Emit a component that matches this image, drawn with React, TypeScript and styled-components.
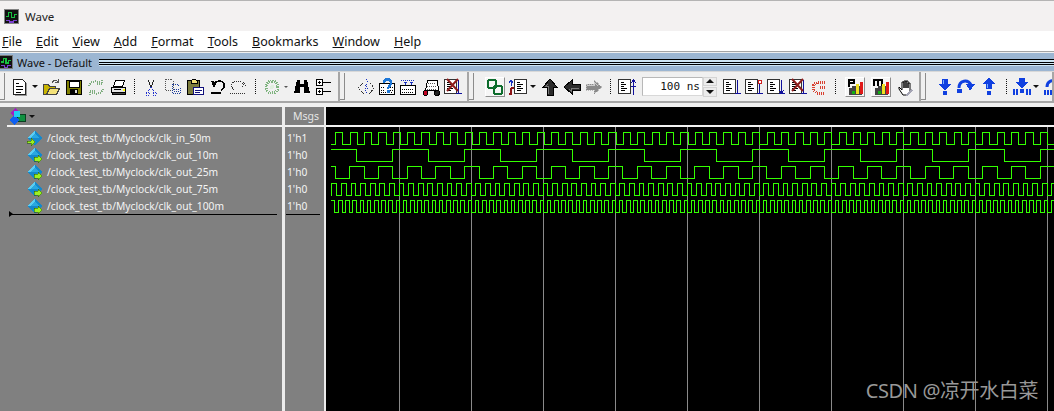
import React from 'react'
import styled, { createGlobalStyle } from 'styled-components'

const GlobalStyle = createGlobalStyle`
  html, body {
    margin: 0;
    padding: 0;
    width: 1054px;
    height: 411px;
    overflow: hidden;
    background: #f0f0f0;
  }
`

const Page = styled.div`
  width: 1054px;
  height: 411px;
  display: flex;
  flex-direction: column;
  overflow: hidden;
  font-family: "Noto Sans", "Liberation Sans", sans-serif;
`

const TitleBar = styled.div`
  height: 30px;
  border-top: 1px solid #b4b4b4;
  background: #f3f1f1;
  display: flex;
  align-items: center;
  gap: 6px;
  padding-left: 4px;
  font-size: 11.5px;
  color: #222;
`

const MenuBar = styled.div`
  height: 20px;
  background: #fff;
  display: flex;
  align-items: center;
  gap: 14px;
  padding-left: 2px;
  font-size: 12.5px;
  color: #111;
`

const MenuItem = styled.span`
  u {
    text-underline-offset: 1px;
  }
`

const SubGap = styled.div`
  height: 1px;
  border-top: 1px solid #a4a4a4;
  background: #f0f0f0;
`

const WindowHeader = styled.div`
  height: 18px;
  background: #9cb6d2;
  display: flex;
  align-items: center;
  gap: 4px;
  font-size: 11px;
  color: #111;
  overflow: hidden;
`

const HeaderStripes = styled.div`
  flex: 1;
  margin-left: 3px;
  height: 7px;
  background: linear-gradient(
    #000 0 1px,
    #cfe6f4 1px 3px,
    #000 3px 4px,
    #cfe6f4 4px 5px,
    #000 5px 6px,
    #cfe6f4 6px 7px
  );
`

const Toolbar = styled.div`
  height: 34px;
  background: #f0f0f0;
  border-top: 1px solid #d8d8d8;
  display: flex;
  box-sizing: border-box;
  padding-bottom: 2px;
`

const ToolGroup = styled.div<{ $w: number }>`
  width: ${p => p.$w}px;
  flex: none;
  display: flex;
  align-items: center;
  box-sizing: border-box;
  border-right: 2px solid #a6a6a6;
  border-bottom: 2px solid #a6a6a6;
  overflow: hidden;
`

const Grip = styled.div`
  width: 5px;
  height: 27px;
  flex: none;
  box-sizing: border-box;
  border-right: 1px solid #8c8c8c;
  border-bottom: 1px solid #8c8c8c;
  margin-right: 1px;
`

const Slot = styled.div<{ $w: number }>`
  width: ${p => p.$w}px;
  height: 24px;
  flex: none;
  display: flex;
  align-items: center;
  justify-content: center;
`

const PushedSlot = styled(Slot)`
  height: 20px;
  box-sizing: border-box;
  margin: 0 3px;
  border: 1px solid #fff;
  border-right-color: #8e8e8e;
  border-bottom-color: #8e8e8e;
  background: #f6f6f6;
`

const Sep = styled.div<{ $w: number }>`
  width: ${p => p.$w}px;
  flex: none;
  height: 15px;
  background: repeating-linear-gradient(#111 0 1px, transparent 1px 2px) center / 1px 100% no-repeat;
`

const DropArrow = styled.div<{ $w: number; $small?: boolean }>`
  width: ${p => p.$w}px;
  flex: none;
  display: flex;
  justify-content: center;
  &::after {
    content: "";
    border-style: solid;
    border-width: ${p => (p.$small ? '2px 2px 0' : '3px 3px 0')};
    border-color: ${p => (p.$small ? '#555' : '#111')} transparent transparent;
  }
`

const TimeInput = styled.div`
  width: 61px;
  height: 19px;
  flex: none;
  box-sizing: border-box;
  margin-left: 2px;
  background: #fff;
  border: 1px solid #d8d8d8;
  border-top-color: #b8b8b8;
  border-left-color: #b8b8b8;
  font-family: "DejaVu Sans Mono", "Liberation Mono", monospace;
  font-size: 11px;
  line-height: 18px;
  text-align: right;
  padding-right: 2px;
  color: #111;
  white-space: nowrap;
`

const Spinner = styled.div`
  width: 14px;
  height: 20px;
  flex: none;
  display: flex;
  flex-direction: column;
  gap: 1px;
  margin-right: 4px;
`

const SpinButton = styled.div<{ $down?: boolean }>`
  flex: 1;
  background: #ececec;
  border: 1px solid #d4d4d4;
  display: flex;
  align-items: center;
  justify-content: center;
  &::after {
    content: "";
    border-style: solid;
    border-width: ${p => (p.$down ? '4px 4px 0' : '0 4px 4px')};
    border-color: ${p => (p.$down ? '#111 transparent transparent' : 'transparent transparent #111')};
  }
`

const Panes = styled.div`
  margin-top: 2px;
  flex: 1;
  display: flex;
  min-height: 0;
  background: #808080;
`

const Pane = styled.div<{ $w: number }>`
  width: ${p => p.$w}px;
  flex: none;
  display: flex;
  flex-direction: column;
  background: #808080;
`

const PaneHead = styled.div`
  height: 18px;
  flex: none;
  display: flex;
  align-items: center;
  color: #e6e6e6;
  font-size: 10.5px;
`

const IconHead = styled(PaneHead)`
  padding-left: 9px;
  gap: 3px;
`

const MsgsHead = styled(PaneHead)`
  justify-content: flex-end;
  padding-right: 5px;
`

const HeadRule = styled.div<{ $inset?: number }>`
  height: 2px;
  flex: none;
  margin-left: ${p => p.$inset || 0}px;
  background: #f2f2f2;
`

const Divider = styled.div<{ $w: number }>`
  width: ${p => p.$w}px;
  flex: none;
  background: #ececec;
`

const Rows = styled.div`
  padding-top: 2px;
  display: flex;
  flex-direction: column;
`

const NameRow = styled.div`
  height: 17px;
  display: flex;
  align-items: center;
  gap: 4px;
  padding-left: 27px;
  color: #f4f4f4;
  font-size: 10.25px;
  white-space: nowrap;
`

const ValueRow = styled.div`
  height: 17px;
  display: flex;
  align-items: center;
  padding-left: 2px;
  color: #f4f4f4;
  font-size: 10.25px;
`

const CursorRule = styled.div<{ $left: number; $width: number }>`
  position: relative;
  margin-left: ${p => p.$left}px;
  width: ${p => p.$width}px;
  height: 1px;
  background: #000;
`

const CursorMark = styled.div`
  position: absolute;
  left: 0;
  top: -3px;
  width: 0;
  height: 0;
  border-style: solid;
  border-width: 3px 0 3px 4px;
  border-color: transparent transparent transparent #000;
`

const WavePane = styled.div`
  flex: 1;
  position: relative;
  background: #000;
  display: flex;
  flex-direction: column;
  min-width: 0;
`

const WaveHead = styled.div`
  height: 18px;
  flex: none;
  background: #000;
`

const WaveSvg = styled.svg`
  display: block;
  flex: none;
`

const Watermark = styled.div`
  position: absolute;
  right: 16px;
  bottom: 9px;
  color: #989898;
  font-family: "Noto Sans", "Noto Sans CJK SC", sans-serif;
  font-size: 20px;
  line-height: 22px;
  letter-spacing: -0.4px;
  white-space: nowrap;
`

const Px = styled.svg<{ $pull?: number }>`
  display: block;
  flex: none;
  shape-rendering: crispEdges;
  margin-left: ${p => p.$pull || 0}px;
`

const Ic = ({ w = 18, h = 18, children }: { w?: number; h?: number; children: React.ReactNode }) => (
  <Px width={w} height={h} viewBox={`0 0 ${w} ${h}`}>{children}</Px>
)

const WaveLogo = ({ size, pull }: { size: number; pull?: number }) => (
  <Px $pull={pull} width={size} height={size} viewBox="0 0 16 16">
    <rect x="0.5" y="0.5" width="15" height="15" fill="#111" stroke="#8a8a8a" />
    <path d="M2 8h3V4h3v5h3V6h3" fill="none" stroke="#18c040" strokeWidth="1.5" />
    <path d="M2 12h4v2h4v-2h4" fill="none" stroke="#7a3fd0" strokeWidth="1.5" />
  </Px>
)

const DocLines = ({ x, y, n = 4 }: { x: number; y: number; n?: number }) => (
  <path
    d={Array.from({ length: n }, (_, i) => `M${x} ${y + i * 3 + 0.5}h${i % 2 ? 5 : 3}`).join('')}
    stroke="#000"
    fill="none"
  />
)

const NewDoc = () => (
  <Ic>
    <path d="M2.5 1.5h9l3 3v12h-12z" fill="#fff" stroke="#222" />
    <path d="M15.5 5v12.5H4" stroke="#999" fill="none" />
    <DocLines x={5} y={5} />
    <path d="M5 8.5h7M5 11.5h7" stroke="#000" />
  </Ic>
)

const OpenFolder = () => (
  <Ic>
    <path d="M1.5 6.5h5l1 2h6v8h-12z" fill="#c8b400" stroke="#444" />
    <path d="M4.5 16.5l3-6h10l-3 6z" fill="#f4e27a" stroke="#444" />
    <path d="M10 4.5c2-2.5 4-2.5 6 -1M16 1v3h-3" stroke="#555" fill="none" />
  </Ic>
)

const SaveDisk = () => (
  <Ic>
    <rect x="1.5" y="2.5" width="15" height="14" fill="#808000" stroke="#000" />
    <rect x="4" y="3" width="10" height="6" fill="#fff" stroke="#000" />
    <rect x="5" y="11" width="8" height="5" fill="#000" />
    <rect x="10" y="12" width="2" height="3" fill="#ddd" />
  </Ic>
)

const RefreshOff = () => (
  <Ic>
    <path d="M2 8c2-5 7-6 11-3M10 6h5V2" stroke="#7fae7f" strokeWidth="2" strokeDasharray="1 1" fill="none" />
    <path d="M16 11c-2 5-7 6-11 3M8 13H3v4" stroke="#7fae7f" strokeWidth="2" strokeDasharray="1 1" fill="none" />
  </Ic>
)

const Printer = () => (
  <Ic>
    <path d="M6.5 2.5h9l-2 6h-9z" fill="#fff" stroke="#000" />
    <path d="M2.5 9.5h14v5h-14z" fill="#e4e4e4" stroke="#000" />
    <path d="M3 14.5h13v2H3z" fill="#444" stroke="#000" />
    <path d="M5 11.5h7" stroke="#000" />
    <path d="M14 11h2v2h-2z" fill="#ff0" />
  </Ic>
)

const Scissors = () => (
  <Ic>
    <path d="M6 2l3 7M12 2l-3 7" stroke="#222" />
    <path d="M9 9l-3 5M9 9l3 5M4 14h3v3H4zM11 14h3v3h-3z" stroke="#2030d0" strokeDasharray="1 1" fill="none" />
  </Ic>
)

const CopyOff = () => (
  <Ic>
    <path d="M1.5 1.5h6l2 2v9h-8z" fill="none" stroke="#555" strokeDasharray="1 1" />
    <path d="M8.5 6.5h5l3 3v6h-8z" fill="none" stroke="#1c3c9c" strokeDasharray="1 1" />
    <path d="M10 11h5M10 13h5" stroke="#1c3c9c" strokeDasharray="1 1" />
  </Ic>
)

const PasteClip = () => (
  <Ic>
    <rect x="1.5" y="2.5" width="12" height="14" fill="#7c7c3c" stroke="#000" />
    <path d="M5 3l2-2h2l2 2v2H5z" fill="#f4e27a" stroke="#000" />
    <rect x="7.5" y="9.5" width="10" height="7" fill="#fff" stroke="#10107c" />
    <path d="M9 12.5h7M9 14.5h5" stroke="#10107c" />
  </Ic>
)

const UndoArrow = () => (
  <Ic>
    <path d="M4 7c3-5 9-5 11 -1 1 3-1 5-3 6" fill="none" stroke="#000" strokeWidth="1.5" />
    <path d="M2 3l6 1-3 6z" fill="#000" />
    <rect x="2" y="14" width="10" height="2" fill="#000" />
  </Ic>
)

const RedoOff = () => (
  <Ic>
    <path d="M15 7C12 2 5 2 3 6c-1 3 1 5 2 6" fill="none" stroke="#333" strokeDasharray="1 1" />
    <path d="M14 4l3 3-4 2" fill="none" stroke="#333" strokeDasharray="1 1" />
    <path d="M1 15h16" stroke="#333" strokeDasharray="1 1" />
  </Ic>
)

const SimOff = () => (
  <Ic>
    <circle cx="9" cy="9" r="6" fill="none" stroke="#7fb47f" strokeWidth="3" strokeDasharray="1 1" />
    <circle cx="9" cy="9" r="2" fill="#dfeedd" />
  </Ic>
)

const Binoculars = () => (
  <Ic>
    <path d="M4 2h3v4h4V2h3l3 13h-6V9H7v6H1z" fill="#000" />
    <path d="M3 15h3M12 15h3" stroke="#fff" />
  </Ic>
)

const TreeBoxes = () => (
  <Ic>
    <rect x="1.5" y="1.5" width="6" height="6" fill="#fff" stroke="#000" />
    <rect x="1.5" y="10.5" width="6" height="6" fill="#fff" stroke="#000" />
    <path d="M3 4.500h3M4.500 3v3M3 13.500h3M4.500 12v3M8 4.500h8M8 13.500h8" stroke="#000" />
  </Ic>
)

const Sparkle = () => (
  <Ic>
    <path d="M9 1l2 4-3 2 3 3-4 1 3 4" stroke="#1830c0" fill="none" strokeDasharray="1 1" />
    <path d="M1 10l5-5M13 5l4 5-5 6M2 11l5 5" stroke="#333" fill="none" strokeDasharray="2 1" />
  </Ic>
)

const HelpBook = () => (
  <Ic>
    <rect x="1.5" y="5.5" width="15" height="11" fill="#fff" stroke="#000" />
    <path d="M3 14h12M3 12h3M12 12h3M3 9h3M12 9h3" stroke="#000" strokeDasharray="1 1" />
    <path d="M6 5c0-5 7-5 7 0 0 3-3 3-3 6" fill="none" stroke="#1e78d8" strokeWidth="2.5" />
    <rect x="9" y="12" width="2.5" height="3" fill="#1e78d8" />
  </Ic>
)

const GridArrows = () => (
  <Ic>
    <path d="M1.5 7.500h15v9h-15z" fill="#fff" stroke="#000" />
    <path d="M3 11h12M3 14h12" stroke="#000" strokeDasharray="1 1" />
    <path d="M2 2h14" stroke="#1830c0" strokeDasharray="1 1" />
    <path d="M5 4h3l-1.500 3zM11 4h3l-1.500 3z" fill="#1830c0" />
  </Ic>
)

const Cart = () => (
  <Ic>
    <path d="M5.500 2.500h10l1 10h-13z" fill="#fff" stroke="#000" />
    <path d="M6 5h8M5 8h9M5 11h9" stroke="#555" strokeDasharray="1 1" />
    <circle cx="3.500" cy="15" r="2.500" fill="#c00020" stroke="#000" />
    <circle cx="15" cy="15" r="2.500" fill="#222" stroke="#000" />
  </Ic>
)

const DocBase = () => (
  <>
    <rect x="0.500" y="1.500" width="12" height="14" fill="#fff" stroke="#333" />
    <path d="M3 4.500h3M3 6.500h5M3 8.500h3M3 10.500h6M3 12.500h4" stroke="#000" />
  </>
)

const DocDrop = ({ crossed, dot, twin }: { crossed?: boolean; dot?: boolean; twin?: boolean }) => (
  <Ic w={18}>
    <DocBase />
    <path d="M14.500 2v13M12 15.500h6" stroke="#10109c" fill="none" />
    {twin && <path d="M12 12l2.500 3 2.500-3" stroke="#10109c" fill="none" />}
    {dot && <path d="M13 2.500h3v3h-3z" fill="#fff" stroke="#d02020" />}
    {crossed && (
      <path d="M3 1l11 12M14 1L3 13" stroke="#8e1c1c" strokeWidth="2" shapeRendering="auto" />
    )}
  </Ic>
)

const DocUp = () => (
  <Ic w={18}>
    <DocBase />
    <path d="M15.500 2v15M13 5l2.500-3L18 5M13 8h5" stroke="#10109c" fill="none" />
  </Ic>
)

const ChainLink = () => (
  <Ic>
    <rect x="2" y="2" width="8" height="8" rx="2" fill="none" stroke="#0c6c2c" strokeWidth="2" />
    <rect x="8" y="8" width="8" height="8" rx="2" fill="none" stroke="#0c6c2c" strokeWidth="2" />
  </Ic>
)

const SwapDoc = () => (
  <Ic w={20}>
    <rect x="6.500" y="1.500" width="12" height="14" fill="#fff" stroke="#333" />
    <path d="M9 4.500h3M9 6.500h6M9 8.500h4M9 10.500h6M9 12.500h4" stroke="#000" />
    <path d="M3 8V3M1 5l2-3 2 3" stroke="#1830c0" fill="none" />
    <path d="M3 10v6h-2M3 10h3" stroke="#8c1418" strokeWidth="2" fill="none" />
  </Ic>
)

const Arrow3d = ({ rotate, off }: { rotate: number; off?: boolean }) => (
  <Ic w={18}>
    <g transform={`rotate(${rotate} 9 9)`}>
      <path
        d="M9 1l7 8h-4v8H6V9H2z"
        fill={off ? '#8a8a8a' : '#2b2b2b'}
        stroke={off ? '#bdbdbd' : '#000'}
        strokeDasharray={off ? '1 1' : undefined}
      />
      <path d="M9 3L4 9h3v7h1V8H6z" fill={off ? '#ccc' : '#777'} />
    </g>
  </Ic>
)

const BreakOff = () => (
  <Ic>
    <path d="M15 4.500H7L3.500 7v5L7 15h8" fill="none" stroke="#d84030" strokeWidth="3" strokeDasharray="1 1" />
    <path d="M10 9.500h6" stroke="#d84030" strokeWidth="3" strokeDasharray="1 1" />
  </Ic>
)

const ProfileBtn = ({ letter }: { letter: 'P' | 'M' }) => (
  <Ic w={18} h={18}>
    {letter === 'P' ? (
      <path d="M2 1h7v5H4v3H2zM4 3v1h3V3z" fill="#000" fillRule="evenodd" />
    ) : (
      <path d="M1 1h10v7H9V3H7v5H5V3H3v5H1z" fill="#000" />
    )}
    <path d="M3 10h3v-2h10v9H3z" fill="#444" />
    <rect x="6" y="13" width="3" height="3" fill="#10b010" />
    <rect x="10" y="6" width="3" height="10" fill="#f0e020" />
    <rect x="14" y="4" width="3" height="12" fill="#e01818" />
  </Ic>
)

const Hand = () => (
  <Ic>
    <path
      d="M3 9l3 3V4h2v6-7h2v7-7h2v7-5h2v9l-2 3H7L3 11z"
      fill="#fff"
      stroke="#000"
      shapeRendering="auto"
    />
    <path d="M9 17l7-6 1 2-6 5z" fill="#a4a4b4" />
  </Ic>
)

const StepDown = () => (
  <Ic>
    <path d="M6 1h6v5h4l-7 6-7-6h4z" fill="#1040e0" />
    <path d="M7 2v4" stroke="#7ab0ff" />
    <circle cx="9" cy="15" r="2.500" fill="#1040e0" />
  </Ic>
)

const StepOver = () => (
  <Ic w={20}>
    <path d="M3 10c0-8 9-9 12-3" fill="none" stroke="#1040e0" strokeWidth="3" shapeRendering="auto" />
    <path d="M10 6h9l-5 7z" fill="#1040e0" />
    <circle cx="3.500" cy="13" r="2.500" fill="#1040e0" />
  </Ic>
)

const StepUp = () => (
  <Ic>
    <path d="M9 0l7 6h-4v5H6V6H2z" fill="#1040e0" />
    <path d="M7 6v4" stroke="#7ab0ff" />
    <circle cx="9" cy="15" r="2.500" fill="#1040e0" />
  </Ic>
)

const StepAll = () => (
  <Ic>
    <path d="M6 0h6v4h4l-7 6-7-6h4z" fill="#1040e0" />
    <circle cx="9" cy="13" r="2.500" fill="#1040e0" />
    <path d="M1 11v6M4 11v6M14 11v6M17 11v6" stroke="#1040e0" strokeWidth="1.500" />
  </Ic>
)

const StepOverAll = () => (
  <Ic w={12}>
    <path d="M3 9c0-6 5-7 9-6" fill="none" stroke="#1040e0" strokeWidth="3" shapeRendering="auto" />
    <path d="M1 12v5M4 12v5M7 12v5M10 12v5" stroke="#1040e0" strokeWidth="1.500" />
  </Ic>
)

const BlockStack = () => (
  <Px width={17} height={17} viewBox="0 0 17 17">
    <path d="M6 0l5 5-5 5-5-5z" fill="#a020c0" />
    <rect x="8" y="6" width="8" height="7" fill="#109040" stroke="#0a4020" />
    <path d="M5 7l5 5-5 5-5-5z" fill="#1060f0" />
    <circle cx="8" cy="6" r="3.500" fill="#20d0f0" />
  </Px>
)

const SignalIcon = ({ leftArrow }: { leftArrow?: boolean }) => (
  <Px width={16} height={16} viewBox="0 0 16 16">
    <path d="M8 0l7 8-7 8-7-8z" fill="#1488cc" />
    <path d="M8 0L1 8h7z" fill="#5ccdf2" />
    <path d="M8 3L4 8h8z" fill="#2aa8e0" />
    {leftArrow ? (
      <path d="M0 11h4V8l4 4-4 4v-3H0z" fill="#9cf024" stroke="#1c4c00" strokeWidth="0.500" />
    ) : (
      <path d="M7 10h4V8l4 4-4 4v-2H7z" fill="#9cf024" stroke="#1c4c00" strokeWidth="0.500" />
    )}
  </Px>
)

const WAVE_COLOR = '#33ff00'
const SVG_W = 728
const LEFT = 331 - 326
const RIGHT = SVG_W

// edges in page x coordinates, the svg starts at x=326
function wavePath(row: number, firstEdge: number, half: number, startHigh: boolean) {
  const hi = 132.5 - 127 + row * 17
  const lo = hi + 12
  let level = startHigh
  let d = `M${LEFT} ${level ? hi : lo}`
  for (let e = firstEdge; e - 326 < RIGHT; e += half) {
    const x = Math.floor(e) - 326 + 0.5
    d += `H${x}`
    level = !level
    d += `V${level ? hi : lo}`
  }
  return d + `H${RIGHT}`
}

const signals = [
  { name: '/clock_test_tb/Myclock/clk_in_50m', value: "1'h1", first: 335.7, half: 7.19, high: false, left: true },
  { name: '/clock_test_tb/Myclock/clk_out_10m', value: "1'h0", first: 356.3, half: 36, high: true },
  { name: '/clock_test_tb/Myclock/clk_out_25m', value: "1'h0", first: 335.3, half: 14.385, high: true },
  { name: '/clock_test_tb/Myclock/clk_out_75m', value: "1'h0", first: 331.9, half: 4.8, high: false },
  { name: '/clock_test_tb/Myclock/clk_out_100m', value: "1'h0", first: 334.8, half: 3.6, high: true },
]

const gridLines = Array.from({ length: 10 }, (_, i) => 399 - 326 + i * 72 + 0.5)

const menus = [
  ['F', 'ile'],
  ['E', 'dit'],
  ['V', 'iew'],
  ['A', 'dd'],
  ['F', 'ormat'],
  ['T', 'ools'],
  ['B', 'ookmarks'],
  ['W', 'indow'],
  ['H', 'elp'],
]

export default function App() {
  return (
    <Page>
      <GlobalStyle />
      <TitleBar>
        <WaveLogo size={15} />
        <span>Wave</span>
      </TitleBar>
      <MenuBar>
        {menus.map(([a, b]) => (
          <MenuItem key={a + b}>
            <u>{a}</u>
            {b}
          </MenuItem>
        ))}
      </MenuBar>
      <SubGap />
      <WindowHeader>
        <WaveLogo size={14} pull={-1} />
        <span>Wave - Default</span>
        <HeaderStripes />
      </WindowHeader>
      <Toolbar>
        <ToolGroup $w={340}>
          <Grip />
          <Slot $w={2} />
          <Slot $w={24}><NewDoc /></Slot>
          <DropArrow $w={6} />
          <Slot $w={26}><OpenFolder /></Slot>
          <Slot $w={20}><SaveDisk /></Slot>
          <Slot $w={24}><RefreshOff /></Slot>
          <Slot $w={20}><Printer /></Slot>
          <Sep $w={12} />
          <Slot $w={22}><Scissors /></Slot>
          <Slot $w={22}><CopyOff /></Slot>
          <Slot $w={22}><PasteClip /></Slot>
          <Slot $w={24}><UndoArrow /></Slot>
          <Slot $w={16}><RedoOff /></Slot>
          <Sep $w={18} />
          <Slot $w={16}><SimOff /></Slot>
          <DropArrow $w={12} $small />
          <Slot $w={20}><Binoculars /></Slot>
          <Slot $w={24}><TreeBoxes /></Slot>
        </ToolGroup>
        <ToolGroup $w={129}>
          <Grip />
          <Slot $w={9} />
          <Slot $w={22}><Sparkle /></Slot>
          <Slot $w={20}><HelpBook /></Slot>
          <Slot $w={22}><GridArrows /></Slot>
          <Slot $w={24}><Cart /></Slot>
          <Slot $w={20}><DocDrop crossed /></Slot>
        </ToolGroup>
        <ToolGroup $w={452}>
          <Grip />
          <Slot $w={7} />
          <PushedSlot $w={20}><ChainLink /></PushedSlot>
          <Slot $w={20}><SwapDoc /></Slot>
          <DropArrow $w={10} />
          <Slot $w={24}><Arrow3d rotate={0} /></Slot>
          <Slot $w={20}><Arrow3d rotate={270} /></Slot>
          <Slot $w={24}><Arrow3d rotate={90} off /></Slot>
          <Sep $w={8} />
          <Slot $w={26}><DocUp /></Slot>
          <TimeInput>100 ns</TimeInput>
          <Spinner>
            <SpinButton />
            <SpinButton $down />
          </Spinner>
          <Slot $w={22}><DocDrop /></Slot>
          <Slot $w={22}><DocDrop dot /></Slot>
          <Slot $w={22}><DocDrop twin /></Slot>
          <Slot $w={22}><DocDrop crossed /></Slot>
          <Slot $w={20}><BreakOff /></Slot>
          <Sep $w={13} />
          <PushedSlot $w={20}><ProfileBtn letter="P" /></PushedSlot>
          <PushedSlot $w={20}><ProfileBtn letter="M" /></PushedSlot>
          <Slot $w={22}><Hand /></Slot>
        </ToolGroup>
        <ToolGroup $w={133}>
          <Grip />
          <Slot $w={7} />
          <Slot $w={22}><StepDown /></Slot>
          <Slot $w={20}><StepOver /></Slot>
          <Slot $w={26}><StepUp /></Slot>
          <Sep $w={8} />
          <Slot $w={23}><StepAll /></Slot>
          <DropArrow $w={6} />
          <Slot $w={22}><StepOverAll /></Slot>
        </ToolGroup>
      </Toolbar>
      <Panes>
        <Pane $w={282}>
          <IconHead>
            <BlockStack />
            <DropArrow $w={6} />
          </IconHead>
          <HeadRule $inset={7} />
          <Rows>
            {signals.map(s => (
              <NameRow key={s.name}>
                <SignalIcon leftArrow={s.left} />
                <span>{s.name}</span>
              </NameRow>
            ))}
            <CursorRule $left={9} $width={268}>
              <CursorMark />
            </CursorRule>
          </Rows>
        </Pane>
        <Divider $w={3} />
        <Pane $w={39}>
          <MsgsHead>Msgs</MsgsHead>
          <HeadRule />
          <Rows>
            {signals.map(s => (
              <ValueRow key={s.name}>{s.value}</ValueRow>
            ))}
            <CursorRule $left={1} $width={34} />
          </Rows>
        </Pane>
        <Divider $w={2} />
        <WavePane>
          <WaveHead />
          <HeadRule />
          <WaveSvg width={SVG_W} height={284} viewBox={`0 0 ${SVG_W} 284`} shapeRendering="crispEdges">
            {gridLines.map(x => (
              <line key={x} x1={x} x2={x} y1={0} y2={284} stroke="#8a8a8a" />
            ))}
            {signals.map((s, i) => (
              <path key={s.name} d={wavePath(i, s.first, s.half, s.high)} fill="none" stroke={WAVE_COLOR} />
            ))}
          </WaveSvg>
          <Watermark>CSDN @凉开水白菜</Watermark>
        </WavePane>
      </Panes>
    </Page>
  )
}
